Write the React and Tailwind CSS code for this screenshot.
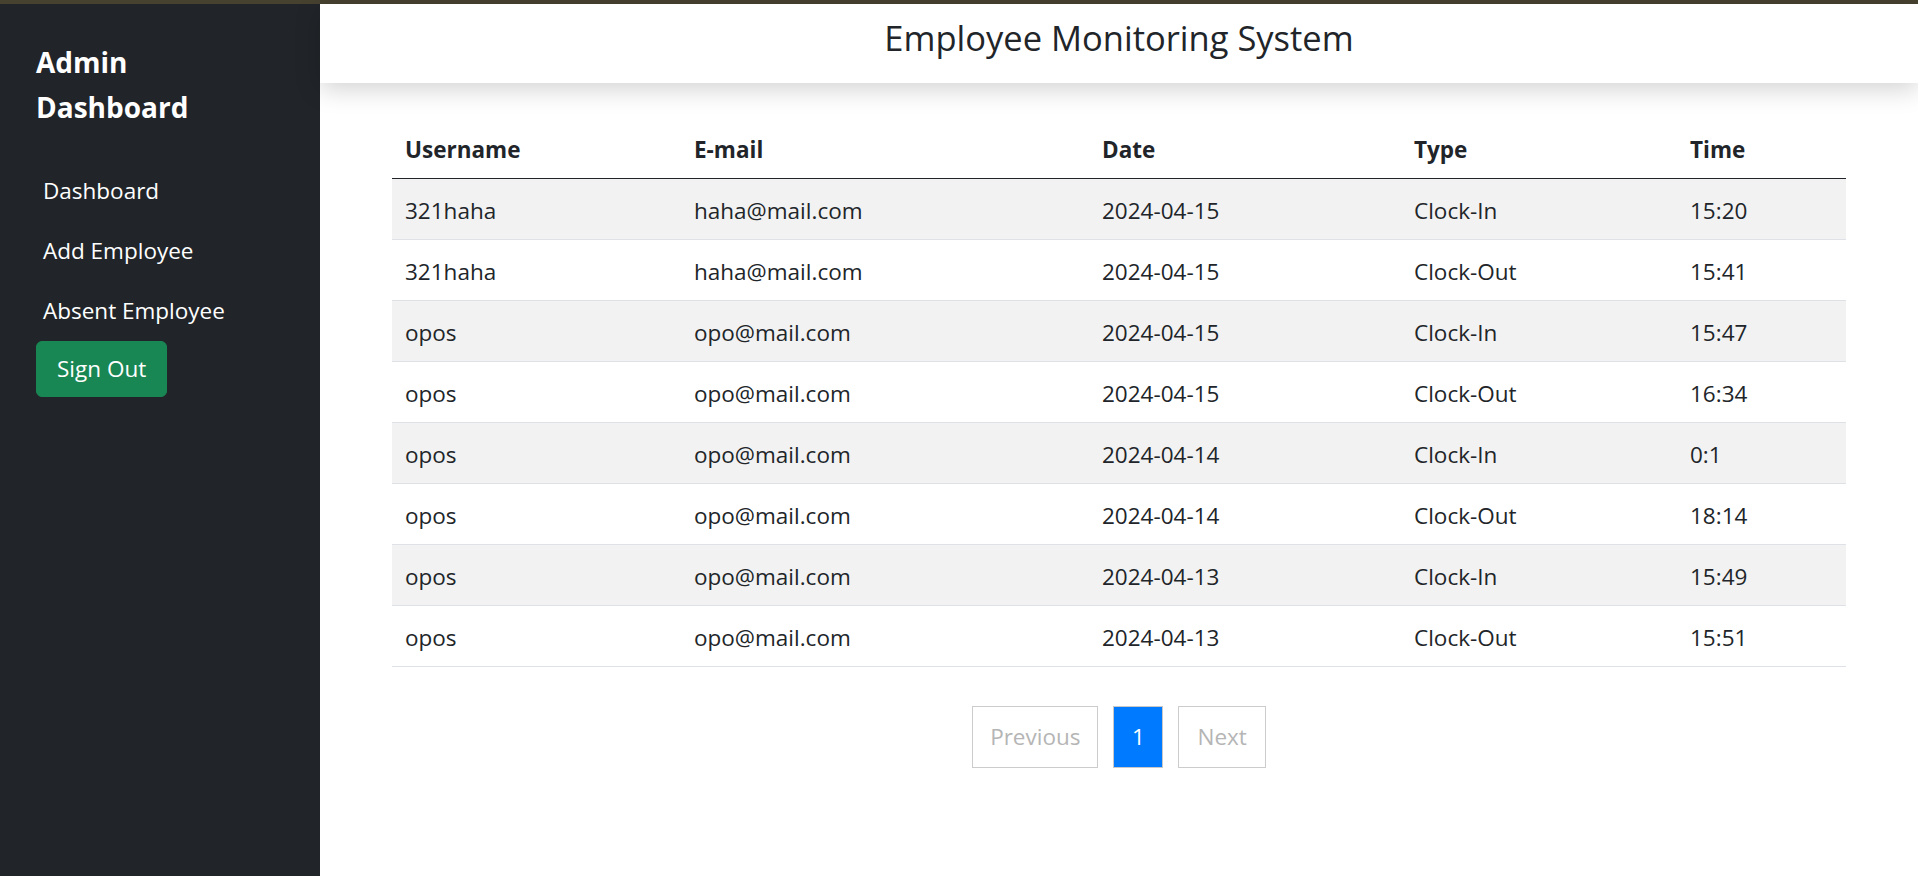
// App.jsx
const rows = [
  { username: "321haha", email: "haha@mail.com", date: "2024-04-15", type: "Clock-In", time: "15:20" },
  { username: "321haha", email: "haha@mail.com", date: "2024-04-15", type: "Clock-Out", time: "15:41" },
  { username: "opos", email: "opo@mail.com", date: "2024-04-15", type: "Clock-In", time: "15:47" },
  { username: "opos", email: "opo@mail.com", date: "2024-04-15", type: "Clock-Out", time: "16:34" },
  { username: "opos", email: "opo@mail.com", date: "2024-04-14", type: "Clock-In", time: "0:1" },
  { username: "opos", email: "opo@mail.com", date: "2024-04-14", type: "Clock-Out", time: "18:14" },
  { username: "opos", email: "opo@mail.com", date: "2024-04-13", type: "Clock-In", time: "15:49" },
  { username: "opos", email: "opo@mail.com", date: "2024-04-13", type: "Clock-Out", time: "15:51" },
];

const Sidebar = () => {
  return (
    <aside className="w-[320px] shrink-0 bg-[#212529] px-[36px] pt-[36px] text-white">
      <h2 className="text-[28px] font-bold leading-[45px]">
        Admin
        <br />
        Dashboard
      </h2>
      <ul className="mt-[31px]">
        <li className="py-[12px] pl-[7px] leading-[36px]">Dashboard</li>
        <li className="py-[12px] pl-[7px] leading-[36px]">Add Employee</li>
        <li className="py-[12px] pl-[7px] leading-[36px]">Absent Employee</li>
      </ul>
      <button className="rounded-[6px] border border-[#198754] bg-[#198754] px-[20px] py-[9px] leading-[36px] text-white">
        Sign Out
      </button>
    </aside>
  );
};

const Pagination = () => {
  return (
    <div className="mt-[39px] flex justify-center gap-[15px]">
      <button className="border border-[#cccccc] bg-white px-[17px] py-[12px] leading-[36px] text-[#b5b5b5]">
        Previous
      </button>
      <button className="w-[50px] border border-[#c8c8c8] bg-[#007bff] py-[12px] leading-[36px] text-white">
        1
      </button>
      <button className="border border-[#cccccc] bg-white px-[18px] py-[12px] leading-[36px] text-[#b5b5b5]">
        Next
      </button>
    </div>
  );
};

export default function App() {
  return (
    <div className="flex min-h-screen flex-col bg-white text-[22.5px] text-[#212529] [font-family:'Segoe_UI','Open_Sans',sans-serif]">
      <div className="h-[4px] bg-[#474130]" />
      <div className="flex flex-1">
        <Sidebar />
        <main className="flex-1">
          <header className="relative z-10 flex h-[79px] justify-center bg-white pt-[13px] shadow-[0_6px_24px_rgba(0,0,0,0.18)]">
            <h1 className="text-[34.5px] font-medium leading-[1.2]">Employee Monitoring System</h1>
          </header>
          <div className="px-[72px] pt-[35px]">
            <table className="w-full border-collapse">
              <thead>
                <tr className="border-b border-[#212529] text-left">
                  <th className="w-[289px] px-[13px] pt-[14px] pb-[10px] font-bold leading-[36px]">Username</th>
                  <th className="w-[408px] px-[13px] pt-[14px] pb-[10px] font-bold leading-[36px]">E-mail</th>
                  <th className="w-[312px] px-[13px] pt-[14px] pb-[10px] font-bold leading-[36px]">Date</th>
                  <th className="w-[276px] px-[13px] pt-[14px] pb-[10px] font-bold leading-[36px]">Type</th>
                  <th className="px-[13px] pt-[14px] pb-[10px] font-bold leading-[36px]">Time</th>
                </tr>
              </thead>
              <tbody>
                {rows.map((r, i) => (
                  <tr key={i} className={`border-b border-[#dee2e6] ${i % 2 === 0 ? "bg-[#f2f2f2]" : "bg-white"}`}>
                    <td className="px-[13px] pt-[14px] pb-[10px] leading-[36px]">{r.username}</td>
                    <td className="px-[13px] pt-[14px] pb-[10px] leading-[36px]">{r.email}</td>
                    <td className="px-[13px] pt-[14px] pb-[10px] leading-[36px]">{r.date}</td>
                    <td className="px-[13px] pt-[14px] pb-[10px] leading-[36px]">{r.type}</td>
                    <td className="px-[13px] pt-[14px] pb-[10px] leading-[36px]">{r.time}</td>
                  </tr>
                ))}
              </tbody>
            </table>
            <Pagination />
          </div>
        </main>
      </div>
    </div>
  );
}
